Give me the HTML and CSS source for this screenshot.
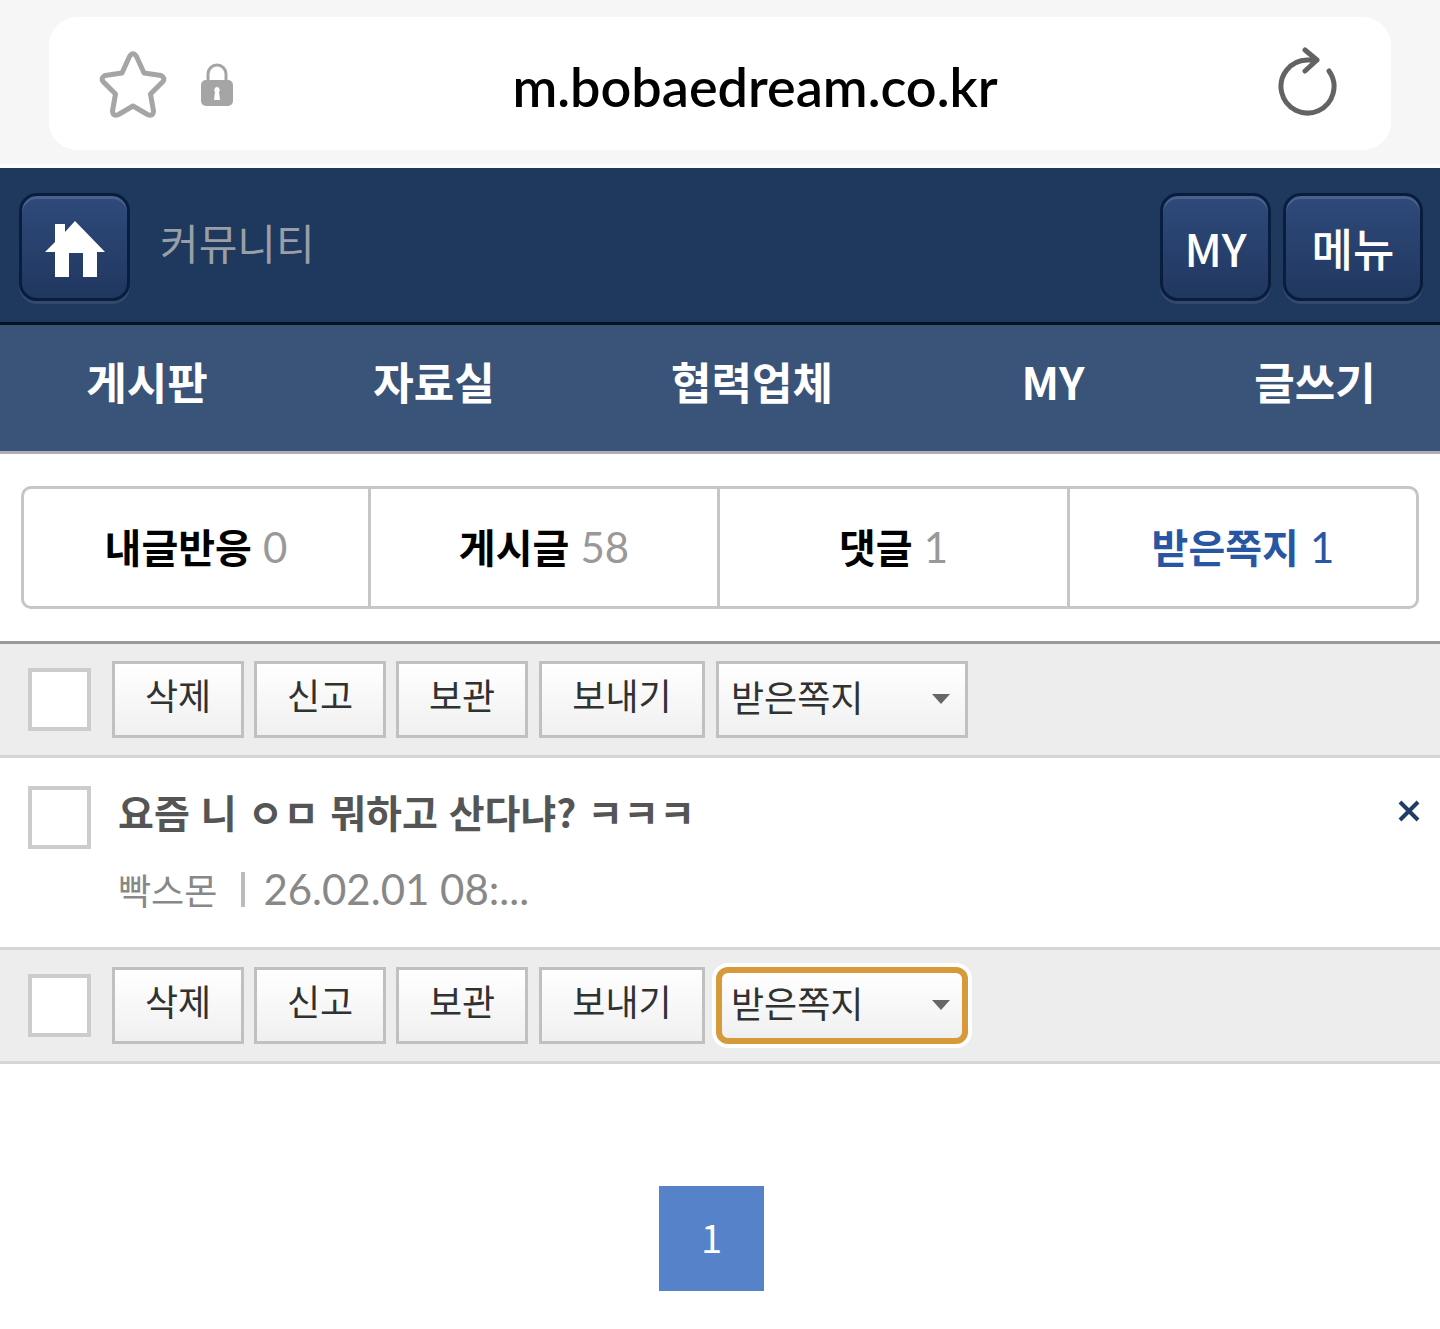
FILE: index.html
```html
<!DOCTYPE html>
<html lang="ko">
<head>
    <meta charset="UTF-8">
    <meta name="viewport" content="width=device-width, initial-scale=1.0">
    <title>받은쪽지</title>
    <link rel="stylesheet" href="styles.css">
</head>
<body>
    <div class="browser-bar">
        <div class="address">
            <button type="button" class="icon-button" aria-label="즐겨찾기">
                <svg class="star" viewBox="0 0 68 68" width="68" height="68">
                    <path d="M30.500 5.500Q34 0 37.500 5.500L45 22L62 24.500Q67 27 63.500 31L51.500 43L54.500 60Q54 66 48.500 63.500L34 55L19.500 63.500Q14 66 13.500 60L16.500 43L4.500 31Q1 27 6 24.500L23 22Z"/>
                </svg>
            </button>
            <svg class="lock" viewBox="0 0 32 44" width="32" height="44">
                <path d="M7 19V11a9 9 0 0 1 18 0V19" fill="none" stroke="#a5a5a5" stroke-width="3"/>
                <rect y="17" width="32" height="26" rx="5" fill="#a5a5a5"/>
                <path d="M16 24a3 3 0 0 1 2 5l1 8h-6l1-8a3 3 0 0 1 2-5z" fill="#fff"/>
            </svg>
            <span class="url">m.bobaedream.co.kr</span>
            <button type="button" class="icon-button" aria-label="새로고침">
                <svg class="reload" viewBox="0 0 60 70" width="60" height="70">
                    <path d="M52 24A26.500 26.500 0 1 1 30 13L40 13M28 3L40 13L28 24"/>
                </svg>
            </button>
        </div>
    </div>

    <header class="header">
        <a href="#" class="header-button home" aria-label="홈">
            <svg viewBox="0 0 60 56" width="60" height="56">
                <path d="M30 0L60 31H52V56H38V32H24V56H10V31H0L10 21V3H20V11Z" fill="#fff"/>
            </svg>
        </a>
        <h1>커뮤니티</h1>
        <a href="#" class="header-button my">MY</a>
        <a href="#" class="header-button menu">메뉴</a>
    </header>

    <nav class="main-nav">
        <a href="#">게시판</a>
        <a href="#">자료실</a>
        <a href="#">협력업체</a>
        <a href="#">MY</a>
        <a href="#">글쓰기</a>
    </nav>

    <main>
        <div class="tabs">
            <a href="#">내글반응 <span>0</span></a>
            <a href="#">게시글 <span>58</span></a>
            <a href="#">댓글 <span>1</span></a>
            <a href="#" class="active">받은쪽지 <span>1</span></a>
        </div>

        <div class="toolbar toolbar-top">
            <input type="checkbox" aria-label="전체 선택">
            <button type="button">삭제</button>
            <button type="button">신고</button>
            <button type="button">보관</button>
            <button type="button" class="wide">보내기</button>
            <div class="select-box">
                <select aria-label="쪽지함">
                    <option>받은쪽지</option>
                </select>
            </div>
        </div>

        <div class="message">
            <input type="checkbox" id="message1" aria-label="쪽지 선택">
            <div class="message-text">
                <a href="#" class="subject">요즘 니 ㅇㅁ 뭐하고 산다냐? ㅋㅋㅋ</a>
                <div class="info">
                    <span class="sender">빡스몬</span>
                    <span class="date">26.02.01 08:...</span>
                </div>
            </div>
            <button type="button" class="delete" aria-label="삭제">
                <svg viewBox="0 0 22 22" width="22" height="22">
                    <path d="M2 2L20 20M20 2L2 20" stroke="#1f3d66" stroke-width="4"/>
                </svg>
            </button>
        </div>

        <div class="toolbar">
            <input type="checkbox" aria-label="전체 선택">
            <button type="button">삭제</button>
            <button type="button">신고</button>
            <button type="button">보관</button>
            <button type="button" class="wide">보내기</button>
            <div class="select-box focused">
                <select aria-label="쪽지함">
                    <option>받은쪽지</option>
                </select>
            </div>
        </div>

        <div class="paging">
            <a href="#">1</a>
        </div>
    </main>
</body>
</html>
```

FILE: styles.css
```css
* {
    box-sizing: border-box;
}
body {
    margin: 0;
    background-color: #fff;
    color: #000;
    font-family: "Noto Sans CJK KR", sans-serif;
}
a {
    color: inherit;
    text-decoration: none;
}
button, select {
    font-family: inherit;
    cursor: pointer;
}
svg {
    display: block;
}

/* browser address bar */
.browser-bar {
    padding: 17px 49px 14px;
    background-color: #f6f6f6;
    border-bottom: 4px solid #fcfcfc;
}
.address {
    display: flex;
    align-items: center;
    height: 133px;
    padding: 2px 54px 0 50px;
    background-color: #fff;
    border-radius: 28px;
}
.icon-button {
    padding: 0;
    background: none;
    border: none;
}
.star {
    fill: none;
    stroke: #a5a5a5;
    stroke-width: 5;
    stroke-linejoin: round;
}
.reload {
    margin-bottom: 6px;
    fill: none;
    stroke: #636366;
    stroke-width: 5;
    stroke-linecap: round;
    stroke-linejoin: round;
}
.lock {
    margin-left: 34px;
}
.url {
    flex: 1;
    padding-top: 4px;
    font-family: Lato, sans-serif;
    font-size: 54px;
    font-weight: 600;
    text-align: center;
}

/* header */
.header {
    display: flex;
    align-items: center;
    height: 157px;
    padding: 4px 17px 0 19px;
    background-color: #1f385e;
    border-bottom: 3px solid #04141e;
}
.header h1 {
    flex: 1;
    margin: 0 0 10px 30px;
    color: #999fa6;
    font-size: 42px;
    font-weight: 400;
    line-height: 60px;
}
.header-button {
    display: flex;
    align-items: center;
    justify-content: center;
    width: 111px;
    height: 108px;
    background: linear-gradient(#2f4a7b, #20375f);
    border: 3px solid #091d3e;
    border-radius: 18px;
    box-shadow: 0 3px 0 #34496c, inset 0 3px 0 #4a6189;
    color: #fff;
    font-size: 45px;
    font-weight: 500;
}
.home {
    padding-top: 3px;
}
.menu {
    width: 140px;
    margin-left: 12px;
}

.main-nav {
    display: grid;
    grid-template-columns: 266fr 308fr 328fr 274fr 250fr;
    padding: 24px 0 38px 14px;
    background-color: #3a5378;
    border-bottom: 3px solid #abafb5;
    color: #fff;
    font-size: 44px;
    font-weight: 700;
    line-height: 64px;
    text-align: center;
}

/* my page tabs */
.tabs {
    display: grid;
    grid-template-columns: 344fr 349fr 350fr 349fr;
    margin: 32px 21px;
    border: 3px solid #c6c6c6;
    border-radius: 10px;
}
.tabs a {
    padding: 25px 0 27px;
    font-size: 40px;
    font-weight: 700;
    line-height: 64px;
    text-align: center;
}
.tabs a + a {
    border-left: 3px solid #c6c6c6;
}
.tabs span {
    color: #999;
    font-family: Lato, sans-serif;
    font-size: 42px;
    font-weight: 400;
}
.tabs .active, .tabs .active span {
    color: #2856a3;
}

/* toolbars above and below the list */
.toolbar {
    display: flex;
    align-items: center;
    gap: 10px;
    padding: 17px 28px;
    background-color: #ededed;
    border-bottom: 3px solid #d5d5d5;
}
.toolbar-top {
    border-top: 3px solid #999;
}
input[type="checkbox"] {
    appearance: none;
    flex: none;
    width: 63px;
    height: 63px;
    margin: 0;
    background-color: #fff;
    border: 4px solid #ccc;
}
.toolbar input[type="checkbox"] {
    margin-right: 11px;
}
.toolbar button, .toolbar select {
    height: 77px;
    padding: 0 0 12px;
    background: linear-gradient(#fff, #f0f0f0);
    border: 3px solid #c0c0c0;
    color: #303232;
    font-size: 36px;
    font-weight: 400;
}
.toolbar button {
    width: 132px;
}
.toolbar .wide {
    width: 166px;
    margin-left: 1px;
}
.select-box {
    position: relative;
    width: 252px;
    margin-left: 1px;
}
.select-box::after {
    content: "";
    position: absolute;
    top: 33px;
    right: 18px;
    border: 9px solid transparent;
    border-top: 10px solid #666;
    border-bottom: none;
    pointer-events: none;
}
.toolbar select {
    appearance: none;
    display: block;
    width: 100%;
    padding: 0 0 8px 12px;
    border-radius: 0;
}
.toolbar .focused select {
    padding-left: 9px;
    border: 6px solid #d69a3a;
    border-radius: 12px;
    box-shadow: 0 0 0 4px #fff;
}

/* message list */
.message {
    display: flex;
    align-items: flex-start;
    padding: 28px 20px 28px 28px;
    border-bottom: 3px solid #d5d5d5;
}
.message-text {
    flex: 1;
    padding-left: 27px;
}
.subject {
    display: block;
    color: #555;
    font-size: 39px;
    font-weight: 700;
    line-height: 50px;
}
.info {
    display: flex;
    align-items: center;
    margin-top: 23px;
    color: #888;
    line-height: 60px;
}
.sender {
    font-size: 36px;
    font-weight: 400;
}
.date {
    display: flex;
    align-items: center;
    font-family: Lato, sans-serif;
    font-size: 42px;
    font-weight: 400;
}
.date::before {
    content: "";
    width: 4px;
    height: 35px;
    margin: 0 18px 0 24px;
    background-color: #bbb;
}
.delete {
    margin-top: 14px;
    padding: 0;
    background: none;
    border: none;
}

.paging {
    display: flex;
    justify-content: center;
    padding: 122px 17px 38px 0;
}
.paging a {
    width: 105px;
    height: 105px;
    background-color: #5582c8;
    color: #fff;
    font-size: 38px;
    line-height: 102px;
    text-align: center;
}
```
